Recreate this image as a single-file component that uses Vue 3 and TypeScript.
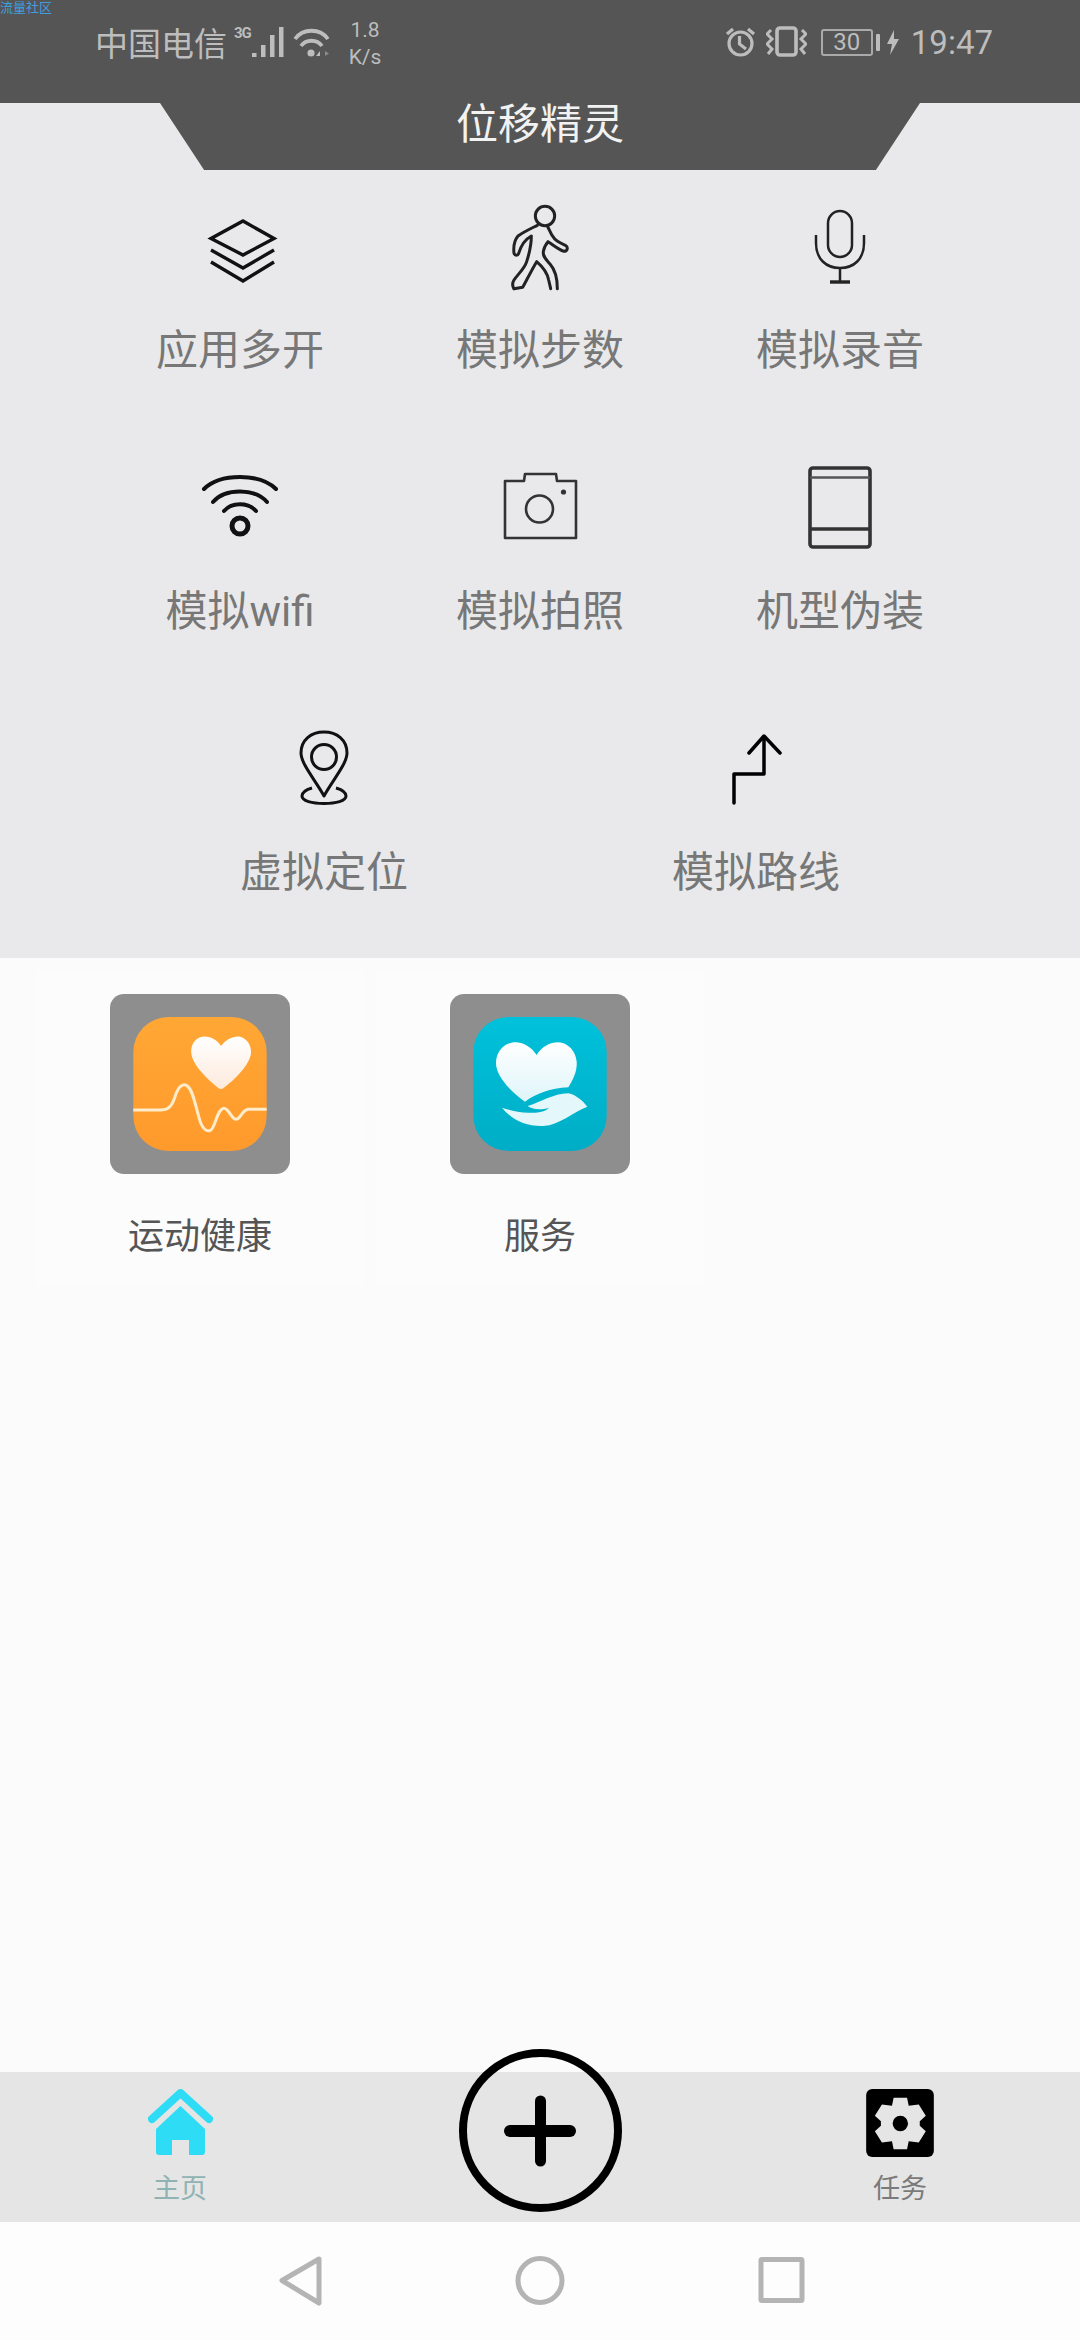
<script setup lang="ts">
const signalBars = [
  { x: 1, h: 4 },
  { x: 10, h: 12 },
  { x: 19, h: 22 },
  { x: 28, h: 30 },
];

const gearPoints =
  "130,68 170,68 175,92 205,88 226,122 208,138 208,152 226,168 205,202 175,198 170,222 130,222 125,198 95,202 74,168 92,152 92,138 74,122 95,88 125,92";
</script>

<template>
  <div class="page">
    <span class="watermark">流量社区</span>

    <header class="status">
      <div class="status-left">
        <span class="carrier">中国电信</span>
        <span class="net">3G</span>
        <svg class="signal" width="33" height="30" viewBox="0 0 33 30">
          <rect
            v-for="bar in signalBars"
            :key="bar.x"
            :x="bar.x"
            :y="30 - bar.h"
            width="4.5"
            :height="bar.h"
            fill="#bdbdbd"
          />
        </svg>
        <svg class="wifi" width="38" height="30" viewBox="0 0 38 30" fill="none" stroke="#bdbdbd" stroke-width="3.8">
          <path d="M2 12 C10 1 27 1 35 12" />
          <path d="M8 19 C13 12 24 12 29 19" />
          <circle cx="18" cy="26" r="3.6" fill="#bdbdbd" stroke="none" />
          <path d="M27 24 L27 29 L23 29Z" fill="#bdbdbd" stroke="none" />
          <path d="M32 24 L36 26.5 L32 29Z" fill="#8a8a8a" stroke="none" />
        </svg>
        <div class="speed">
          <span>1.8</span>
          <span>K/s</span>
        </div>
      </div>
      <div class="status-right">
        <svg width="31" height="31" viewBox="0 0 31 31" fill="none" stroke="#bdbdbd" stroke-width="3.2">
          <circle cx="15.5" cy="17.5" r="11.5" />
          <path d="M14.5 10 V18 L21 23" />
          <path d="M2 8 L8 3 M29 8 L23 3" />
        </svg>
        <svg class="vibrate" width="41" height="31" viewBox="0 0 41 31" fill="none" stroke="#bdbdbd" stroke-width="3">
          <rect x="11" y="2" width="19" height="27" rx="3" stroke-width="3.6" />
          <path d="M5 4 L1 8 L6 13 L1 18 L6 23 L2 28" />
          <path d="M36 4 L40 8 L35 13 L40 18 L35 23 L39 28" />
        </svg>
        <div class="battery">30</div>
        <i class="battery-nub"></i>
        <svg class="bolt" width="12" height="25" viewBox="0 0 12 25">
          <polygon points="7,0 0,14 5,14 3,25 12,9 7,9" fill="#bdbdbd" />
        </svg>
        <span class="time">19:47</span>
      </div>
    </header>

    <section class="panel">
      <h1 class="title">位移精灵</h1>

      <div class="tools">
        <div class="tool">
          <svg class="tool-icon" viewBox="0 0 100 100" fill="none" stroke="#111" stroke-width="3.4">
            <path d="M53 24 L84 41.5 L53 58 L21 41.5Z" />
            <path d="M21 53 L53 71 L84 53" />
            <path d="M21 65 L53 84 L84 65" />
          </svg>
          <span class="tool-label">应用多开</span>
        </div>
        <div class="tool">
          <svg class="tool-icon" viewBox="0 21 300 300" fill="none" stroke="#222" stroke-width="9" stroke-linecap="round" stroke-linejoin="round">
            <circle cx="165" cy="78" r="29" />
            <path d="M142 106 C122 116 100 126 84 138 C74 150 70 172 72 190 C75 198 84 197 86 190 C92 170 102 150 124 138 C124 165 118 190 110 215 C104 236 84 252 72 270 C66 280 68 290 72 296" />
            <path d="M72 296 L98 292 C110 270 125 240 140 215 C160 232 172 250 176 270 L182 296" />
            <path d="M202 296 C202 270 196 240 180 222 C168 208 158 200 160 185 C162 172 168 162 174 155 C190 165 205 178 222 184 C232 184 236 172 226 166 C208 158 195 152 186 136 C180 124 176 116 172 108" />
          </svg>
          <span class="tool-label">模拟步数</span>
        </div>
        <div class="tool">
          <svg class="tool-icon" viewBox="0 0 100 100" fill="none" stroke="#222" stroke-width="2.5">
            <rect x="38" y="14" width="24" height="46" rx="12" />
            <path d="M26 38 V46 C26 62 36 71 50 71 C64 71 74 62 74 46 V38" />
            <path d="M50 71 V85" />
            <path d="M40 85 H60" stroke-width="3.4" />
          </svg>
          <span class="tool-label">模拟录音</span>
        </div>

        <div class="tool">
          <svg class="tool-icon" viewBox="0 0 100 100" fill="none" stroke="#111" stroke-width="4" stroke-linecap="round">
            <path d="M14 31 C30 15 70 15 86 31" />
            <path d="M23 44 C35 30 65 30 77 44" />
            <path d="M34 53 C42 44 58 44 66 53" />
            <circle cx="50" cy="68" r="8" stroke-width="5" />
          </svg>
          <span class="tool-label">模拟wifi</span>
        </div>
        <div class="tool">
          <svg class="tool-icon" viewBox="0 0 100 100" fill="none" stroke="#333" stroke-width="2.6" stroke-linejoin="round">
            <path d="M15 23 H34 L35 16 H66 L67 23 H86 V80 H15Z" />
            <circle cx="49.5" cy="51" r="13.5" />
            <circle cx="73.5" cy="34" r="2.6" fill="#333" stroke="none" />
          </svg>
          <span class="tool-label">模拟拍照</span>
        </div>
        <div class="tool">
          <svg class="tool-icon" viewBox="0 0 100 100" fill="none" stroke="#333" stroke-width="3.6">
            <rect x="20" y="10" width="60" height="79" rx="3" />
            <path d="M20 19.5 H80" stroke="#555" stroke-width="2.6" />
            <path d="M20 71 H80" />
          </svg>
          <span class="tool-label">机型伪装</span>
        </div>
      </div>

      <div class="tools tools--two">
        <div class="tool">
          <svg class="tool-icon" viewBox="0 0 100 100" fill="none" stroke="#111" stroke-width="3">
            <path d="M50 77 C42 62 27 45 27 34 C27 21 37 13 50 13 C63 13 73 21 73 34 C73 45 58 62 50 77Z" stroke-linejoin="round" />
            <circle cx="50" cy="38" r="12.5" />
            <path d="M38 69 C31 71 28 74 28 77 C28 82 38 84.5 50 84.5 C62 84.5 72 82 72 77 C72 74 69 71 62 69" />
          </svg>
          <span class="tool-label">虚拟定位</span>
        </div>
        <div class="tool">
          <svg class="tool-icon" viewBox="0 0 100 100" fill="none" stroke="#000" stroke-width="3.5" stroke-linecap="round" stroke-linejoin="round">
            <path d="M28 84 V55 H58 V18" />
            <path d="M43 34 L58 17 L74 34" />
          </svg>
          <span class="tool-label">模拟路线</span>
        </div>
      </div>
    </section>

    <section class="apps">
      <div class="app">
        <div class="app-tile">
          <svg class="app-icon" viewBox="100 51 400 402">
            <defs>
              <linearGradient id="orangeBg" x1="0" y1="0" x2="0" y2="1">
                <stop offset="0" stop-color="#ffa735" />
                <stop offset="1" stop-color="#ff9a2c" />
              </linearGradient>
              <linearGradient id="orangeHeart" x1="0" y1="0" x2="0" y2="1">
                <stop offset="0" stop-color="#ffffff" />
                <stop offset="1" stop-color="#fdeadb" />
              </linearGradient>
            </defs>
            <rect x="100" y="51" width="400" height="402" rx="105" fill="url(#orangeBg)" />
            <path
              d="M363 138 C345 112 320 106 300 112 C280 120 272 140 274 160 C276 195 330 245 355 264 C360 268 366 268 371 264 C398 245 450 195 453 160 C455 135 440 115 420 110 C400 107 378 118 363 138Z"
              fill="url(#orangeHeart)"
            />
            <path
              d="M100 330 H180 C205 330 215 320 225 290 C235 258 250 248 262 258 C278 270 285 310 295 345 C303 380 315 395 330 392 C345 388 350 330 370 325 C385 322 395 358 408 358 C422 358 425 330 445 328 H500"
              fill="none"
              stroke="#ffeccb"
              stroke-width="9"
            />
          </svg>
        </div>
        <span class="app-label">运动健康</span>
      </div>

      <div class="app">
        <div class="app-tile">
          <svg class="app-icon" viewBox="100 51 400 402">
            <defs>
              <linearGradient id="tealBg" x1="0" y1="0" x2="0" y2="1">
                <stop offset="0" stop-color="#00c1db" />
                <stop offset="1" stop-color="#00adc6" />
              </linearGradient>
              <linearGradient id="tealHeart" x1="0" y1="0" x2="0" y2="1">
                <stop offset="0" stop-color="#ffffff" />
                <stop offset="1" stop-color="#def5f9" />
              </linearGradient>
            </defs>
            <rect x="100" y="51" width="400" height="402" rx="105" fill="url(#tealBg)" />
            <path
              d="M290 165 C270 135 240 123 215 128 C185 135 168 160 168 190 C168 225 205 270 255 305 C290 280 330 265 385 262 C402 235 412 210 410 185 C408 155 385 128 355 127 C330 127 305 140 290 165Z"
              fill="url(#tealHeart)"
            />
            <path
              d="M186 323 C210 330 240 340 275 338 C300 338 320 332 327 323 C305 330 280 330 263 318 C300 308 340 280 385 280 C410 285 430 305 442 320 C400 335 360 375 310 378 C260 380 215 360 186 323Z"
              fill="#e4f7fa"
            />
          </svg>
        </div>
        <span class="app-label">服务</span>
      </div>
    </section>

    <nav class="tabs">
      <div class="tab">
        <svg class="tab-icon" width="65" height="68" viewBox="0 0 65 68">
          <path d="M4 30 L32.5 4 L61 30" fill="none" stroke="#2fdcf6" stroke-width="8" stroke-linecap="round" stroke-linejoin="round" />
          <path d="M32.5 17 L57 40 V63 Q57 66 54 66 H41 V51 H24 V66 H11 Q8 66 8 63 V40Z" fill="#2fdcf6" />
        </svg>
        <span class="tab-label tab-label--active">主页</span>
      </div>
      <div class="tab tab--add">
        <svg width="163" height="163" viewBox="0 0 163 163" fill="none" stroke="#000">
          <circle cx="81.5" cy="81.5" r="77.5" stroke-width="8" />
          <path d="M51 82 H111" stroke-width="12" stroke-linecap="round" />
          <path d="M81.5 52 V112" stroke-width="11" stroke-linecap="round" />
        </svg>
      </div>
      <div class="tab">
        <svg class="tab-icon" width="68" height="68" viewBox="48 42 202 203">
          <rect x="48" y="42" width="202" height="203" rx="18" fill="#000" />
          <polygon :points="gearPoints" fill="#e5e5e5" />
          <circle cx="150" cy="145" r="23" fill="#000" />
        </svg>
        <span class="tab-label">任务</span>
      </div>
    </nav>

    <footer class="sysnav">
      <svg width="60" height="60" viewBox="0 0 60 60" fill="none" stroke="#b4b4b4" stroke-width="5" stroke-linejoin="round">
        <path d="M49 8 L12 29.5 L49 52Z" />
      </svg>
      <svg width="60" height="60" viewBox="0 0 60 60" fill="none" stroke="#b4b4b4" stroke-width="5">
        <circle cx="30" cy="29.5" r="22" />
      </svg>
      <svg width="60" height="60" viewBox="0 0 60 60" fill="none" stroke="#b4b4b4" stroke-width="5">
        <rect x="11" y="8.5" width="41" height="41" rx="1" />
      </svg>
    </footer>
  </div>
</template>

<style>
html,
body {
  margin: 0;
  padding: 0;
}
</style>

<style scoped>
.page {
  position: relative;
  display: flex;
  flex-direction: column;
  width: 1080px;
  height: 2340px;
  overflow: hidden;
  font-family: Roboto, "Noto Sans CJK SC", sans-serif;
  background: #fbfbfb;
}
.watermark {
  position: absolute;
  top: 0;
  left: 0;
  font-size: 13px;
  line-height: 15px;
  color: #3f9fe0;
}

.status {
  flex: none;
  display: flex;
  justify-content: space-between;
  box-sizing: border-box;
  height: 103px;
  padding: 0 87px 0 95px;
  color: #bdbdbd;
  background: #555;
}
.status-left {
  display: flex;
  align-items: flex-start;
}
.carrier {
  margin-top: 23px;
  font-size: 33px;
  line-height: 44px;
}
.net {
  margin: 25px 0 0 7px;
  width: 17px;
  font-size: 15px;
  line-height: 16px;
  font-weight: 700;
  letter-spacing: -1px;
}
.signal {
  margin-top: 27px;
}
.wifi {
  margin: 27px 0 0 9px;
}
.speed {
  display: flex;
  flex-direction: column;
  align-items: center;
  width: 34px;
  margin: 17px 0 0 17px;
  font-size: 21px;
  line-height: 27px;
}
.status-right {
  display: flex;
  align-items: flex-start;
  padding-top: 26px;
}
.vibrate {
  margin-left: 10px;
}
.battery {
  box-sizing: border-box;
  width: 52px;
  height: 27px;
  margin: 3px 0 0 14px;
  border: 2px solid #aaa;
  border-radius: 3px;
  font-size: 24px;
  line-height: 23px;
  text-align: center;
}
.battery-nub {
  width: 4px;
  height: 17px;
  margin: 8px 0 0 3px;
  background: #bdbdbd;
  border-radius: 1px;
}
.bolt {
  margin: 4px 0 0 7px;
}
.time {
  margin: -3px 0 0 12px;
  font-size: 33px;
  line-height: 40px;
}

.panel {
  flex: none;
  box-sizing: border-box;
  height: 855px;
  background: #e9e9eb;
}
.title {
  box-sizing: border-box;
  width: 760px;
  height: 67px;
  margin: 0 auto 27px;
  font-size: 42px;
  font-weight: 400;
  line-height: 44px;
  color: #f2f2f2;
  text-align: center;
  background: #555;
  clip-path: polygon(0 0, 100% 0, 94.2% 100%, 5.8% 100%);
}
.tools {
  display: grid;
  grid-template-columns: repeat(3, 300px);
  row-gap: 77px;
  padding-left: 90px;
}
.tools--two {
  grid-template-columns: repeat(2, 432px);
  margin-top: 77px;
  padding-left: 108px;
}
.tool {
  display: flex;
  flex-direction: column;
  align-items: center;
  gap: 24px;
}
.tool-icon {
  display: block;
  width: 100px;
  height: 100px;
}
.tool-label {
  font-size: 42px;
  line-height: 60px;
  color: #777;
}

.apps {
  flex: 1;
  display: grid;
  grid-template-columns: repeat(3, 340px);
  align-content: start;
  padding: 12px 30px 0;
}
.app {
  display: flex;
  flex-direction: column;
  align-items: center;
  box-sizing: border-box;
  height: 316px;
  margin: 0 6px;
  padding-top: 24px;
  background: #fcfcfc;
}
.app-tile {
  display: flex;
  align-items: center;
  justify-content: center;
  width: 180px;
  height: 180px;
  border-radius: 14px;
  background: #8e8e8e;
}
.app-icon {
  display: block;
  width: 134px;
  height: 134px;
}
.app-label {
  margin-top: 37px;
  font-size: 36px;
  line-height: 52px;
  color: #555;
}

.tabs {
  flex: none;
  display: grid;
  grid-template-columns: repeat(3, 360px);
  height: 150px;
  background: #e5e5e5;
}
.tab {
  display: flex;
  flex-direction: column;
  align-items: center;
  padding-top: 17px;
}
.tab--add {
  padding-top: 0;
  margin-top: -23px;
}
.tab-icon {
  display: block;
}
.tab-label {
  margin-top: 14px;
  font-size: 27px;
  line-height: 36px;
  color: #7a7a7a;
}
.tab-label--active {
  color: #8fb3b3;
}

.sysnav {
  flex: none;
  display: flex;
  align-items: center;
  justify-content: center;
  gap: 180px;
  height: 118px;
  background: #fdfdfd;
}
</style>
